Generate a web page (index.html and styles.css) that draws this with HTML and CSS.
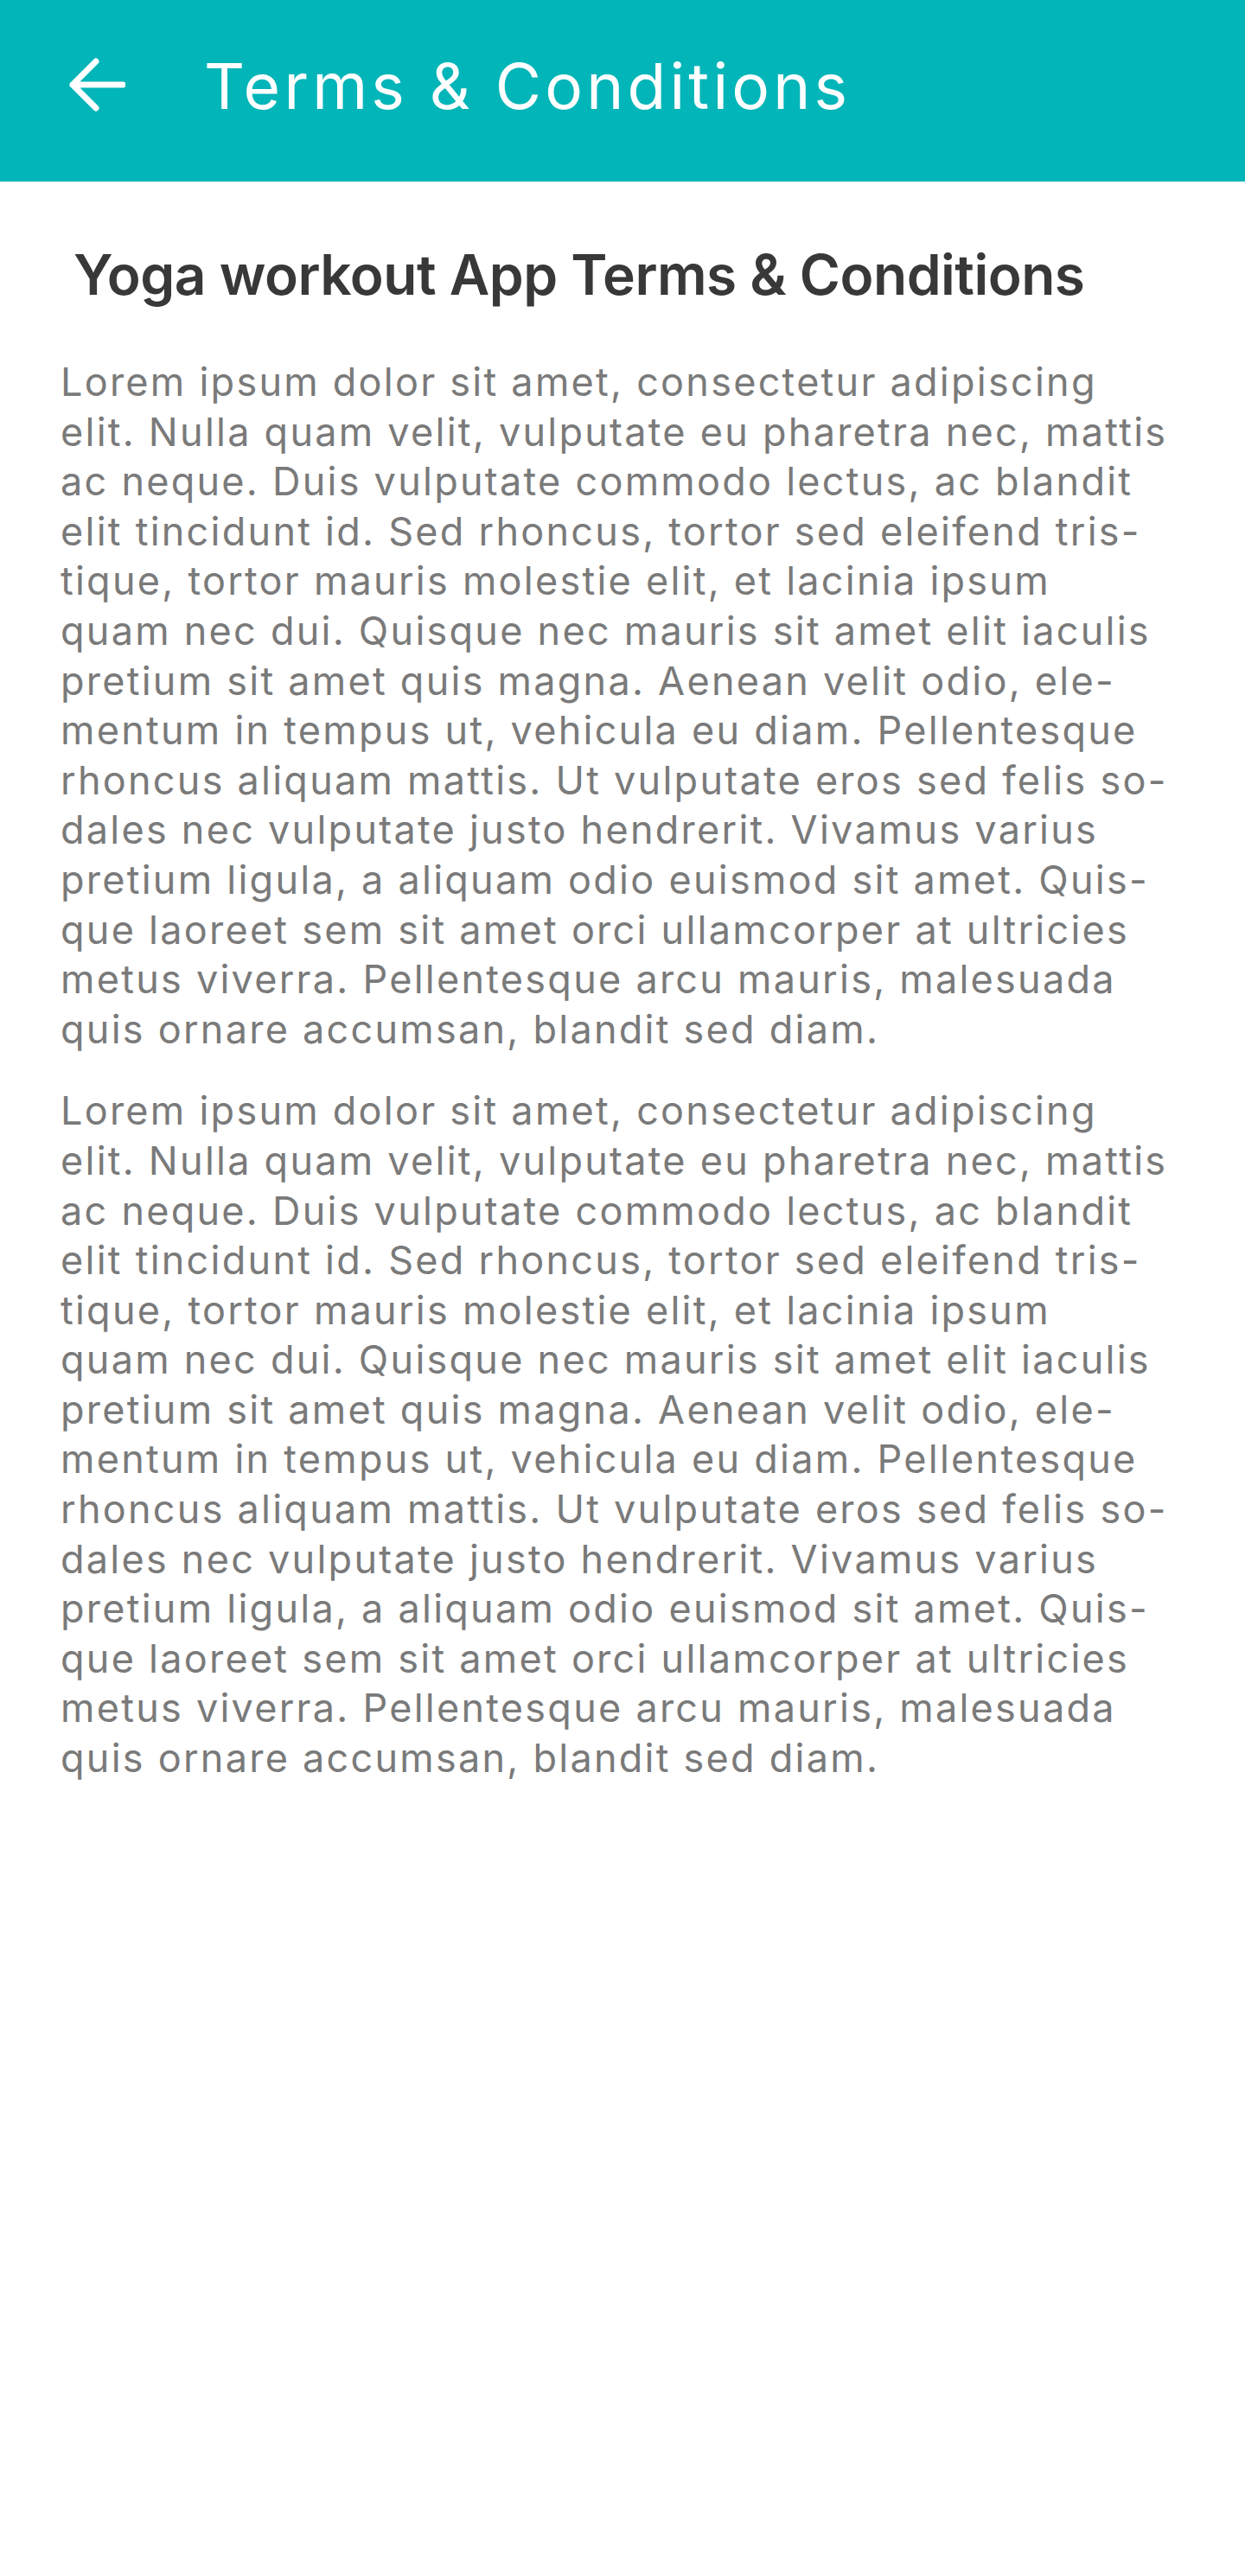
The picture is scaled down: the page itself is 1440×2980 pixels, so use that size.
FILE: index.html
```html
<!DOCTYPE html>
<html lang="en">
<head>
<meta charset="utf-8">
<title>Terms &amp; Conditions</title>
<link rel="stylesheet" href="styles.css">
</head>
<body>
<header class="appbar">
  <button class="back" aria-label="Back">
    <svg viewBox="0 0 96 96" width="96" height="96" aria-hidden="true">
      <path d="M35 41 H93 M35 41 L62 14 M35 41 L62 68" fill="none" stroke="#fff" stroke-width="7" stroke-linecap="round" stroke-linejoin="round"/>
    </svg>
  </button>
  <h1 class="appbar-title">Terms &amp; Conditions</h1>
</header>
<main class="content">
  <h2 class="heading">Yoga workout App Terms &amp; Conditions</h2>
  <p class="para">Lorem ipsum dolor sit amet, consectetur adipiscing<br>elit. Nulla quam velit, vulputate eu pharetra nec, mattis<br>ac neque. Duis vulputate commodo lectus, ac blandit<br>elit tincidunt id. Sed rhoncus, tortor sed eleifend tris-<br>tique, tortor mauris molestie elit, et lacinia ipsum<br>quam nec dui. Quisque nec mauris sit amet elit iaculis<br>pretium sit amet quis magna. Aenean velit odio, ele-<br>mentum in tempus ut, vehicula eu diam. Pellentesque<br>rhoncus aliquam mattis. Ut vulputate eros sed felis so-<br>dales nec vulputate justo hendrerit. Vivamus varius<br>pretium ligula, a aliquam odio euismod sit amet. Quis-<br>que laoreet sem sit amet orci ullamcorper at ultricies<br>metus viverra. Pellentesque arcu mauris, malesuada<br>quis ornare accumsan, blandit sed diam.</p>
  <p class="para">Lorem ipsum dolor sit amet, consectetur adipiscing<br>elit. Nulla quam velit, vulputate eu pharetra nec, mattis<br>ac neque. Duis vulputate commodo lectus, ac blandit<br>elit tincidunt id. Sed rhoncus, tortor sed eleifend tris-<br>tique, tortor mauris molestie elit, et lacinia ipsum<br>quam nec dui. Quisque nec mauris sit amet elit iaculis<br>pretium sit amet quis magna. Aenean velit odio, ele-<br>mentum in tempus ut, vehicula eu diam. Pellentesque<br>rhoncus aliquam mattis. Ut vulputate eros sed felis so-<br>dales nec vulputate justo hendrerit. Vivamus varius<br>pretium ligula, a aliquam odio euismod sit amet. Quis-<br>que laoreet sem sit amet orci ullamcorper at ultricies<br>metus viverra. Pellentesque arcu mauris, malesuada<br>quis ornare accumsan, blandit sed diam.</p>
</main>
</body>
</html>
```

FILE: styles.css
```css
html, body { margin: 0; padding: 0; background: #fff; }
body { font-family: Inter, "Noto Sans", sans-serif; }
.appbar { height: 210px; background: #02b5b8; display: flex; align-items: center; }
.back { width: 96px; height: 96px; margin-left: 49px; padding: 0; border: 0; background: none; display: flex; }
.appbar-title { margin: 0 0 0 91px; color: #fff; font-weight: 400; font-size: 73px; letter-spacing: 4.2px; line-height: 96px; padding-bottom: 11px; }
.content { padding: 0 40px 0 70px; }
.heading { margin: 68px 0 0 15px; font-size: 64px; font-weight: 600; color: #383838; line-height: 80px; letter-spacing: -0.5px; }
.para { margin: 37px 0 0 0; font-size: 45px; line-height: 57.6px; color: #7a7a7a; letter-spacing: 2.25px; white-space: nowrap; }
.heading + .para { margin-top: 55px; }
```
